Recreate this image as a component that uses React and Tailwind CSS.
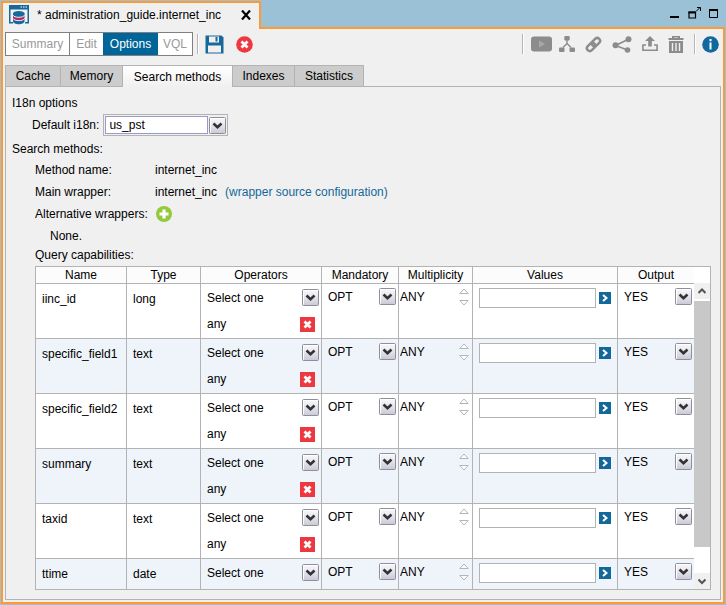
import React from "react";

const rows = [
  { name: "iinc_id", type: "long", operators: ["any"] },
  { name: "specific_field1", type: "text", operators: ["any"] },
  { name: "specific_field2", type: "text", operators: ["any"] },
  { name: "summary", type: "text", operators: ["any"] },
  { name: "taxid", type: "text", operators: ["any"] },
  { name: "ttime", type: "date", operators: [] },
];

const columns = [
  { label: "Name", width: "w-[91px]" },
  { label: "Type", width: "w-[74px]" },
  { label: "Operators", width: "w-[121px]" },
  { label: "Mandatory", width: "w-[77px]" },
  { label: "Multiplicity", width: "w-[74px]" },
  { label: "Values", width: "" },
  { label: "Output", width: "w-[76px]" },
];

function Chevron() {
  return (
    <svg className="pointer-events-none col-start-1 row-start-1 size-[17px] justify-self-end" viewBox="0 0 17 17">
      <defs>
        <linearGradient id="chevronFace" x1="0" y1="0" x2="0" y2="1">
          <stop offset="0" stopColor="#fafafc" />
          <stop offset="0.5" stopColor="#e4e4ec" />
          <stop offset="1" stopColor="#c9c9d6" />
        </linearGradient>
      </defs>
      <rect x="0.5" y="0.5" width="16" height="16" rx="1" fill="url(#chevronFace)" stroke="#8f8f9c" />
      <path d="M1.5 15.5V1.5h14" fill="none" stroke="#fff" />
      <path d="M4.5 6.5L8.5 10.2L12.5 6.5" fill="none" stroke="#333" strokeWidth="2.6" />
    </svg>
  );
}

function Picker({ value, label }) {
  return (
    <div className="grid items-center">
      <select
        aria-label={label}
        defaultValue={value}
        className="col-start-1 row-start-1 h-[17px] w-full appearance-none bg-transparent leading-4 outline-none"
      >
        <option>{value}</option>
      </select>
      <Chevron />
    </div>
  );
}

function Spinner({ label }) {
  return (
    <div className="flex items-center justify-between">
      <input aria-label={label} defaultValue="ANY" className="h-[17px] w-12 bg-transparent outline-none" />
      <svg className="h-[18px] w-[10px]" viewBox="0 0 10 18" fill="#fff" stroke="#b5b5b5">
        <path d="M0.8 5.5h8.4L5 1z" />
        <path d="M0.8 12.5h8.4L5 17z" />
      </svg>
    </div>
  );
}

function DeleteButton() {
  return (
    <button type="button" aria-label="Remove operator" className="size-[15px]">
      <svg className="block size-[15px]" viewBox="0 0 15 15">
        <rect width="15" height="15" fill="#ee383f" />
        <path d="M4.5 4.5l6 6M10.5 4.5l-6 6" stroke="#fff" strokeWidth="2.8" />
      </svg>
    </button>
  );
}

function Separator() {
  return <span className="h-5 w-[2px] border-r border-l border-r-white border-l-[#b5b5b5]" />;
}

function DatabaseIcon() {
  return (
    <svg className="h-5 w-[22px]" viewBox="0 0 22 20">
      <path d="M1 0h20v18.500h-4V17h2.500V4.500h-17V17H5v1.500H1z" fill="#17699c" />
      <path d="M12.500 2h1.500M15 2h1.500M17.500 2h1.500" stroke="#fff" strokeWidth="1" />
      <path d="M5 13.800v2.400c0 4 11.500 4 11.500 0v-2.400z" fill="#17699c" />
      <path d="M5 10.300v2.900c0 3.200 11.500 3.200 11.500 0v-2.900c-1 2.500-10.500 2.500-11.500 0z" fill="#b8295f" />
      <path d="M5 8.600v1.700c0 3 11.500 3 11.500 0V8.600z" fill="#17699c" />
      <ellipse cx="10.750" cy="8.400" rx="5.750" ry="2.300" fill="#17699c" />
      <path d="M5 10.200c1 2.800 10.500 2.800 11.500 0M5 13.500c1 2.800 10.500 2.800 11.500 0" fill="none" stroke="#fff" strokeWidth="0.900" />
    </svg>
  );
}

function SaveIcon() {
  return (
    <svg className="size-[19px]" viewBox="0 0 19 19">
      <path d="M0.500 0.500h16l2 2v16h-18z" fill="#17699c" />
      <path d="M4 1.500h10v6H4z" fill="#f0f0f0" />
      <path d="M10.500 2h2v4.500h-2z" fill="#17699c" />
      <path d="M3 10.500h13v7H3z" fill="#f0f0f0" />
    </svg>
  );
}

function CancelIcon() {
  return (
    <svg className="size-[17px]" viewBox="0 0 17 17">
      <circle cx="8.500" cy="8.500" r="8.300" fill="#ee383f" />
      <path d="M5.500 5.500l6 6M11.500 5.500l-6 6" stroke="#fff" strokeWidth="2.800" />
    </svg>
  );
}

function VideoIcon() {
  return (
    <svg className="h-4 w-[21px]" viewBox="0 0 21 16">
      <rect y="0.500" width="21" height="15" rx="3" fill="#8c8c8c" />
      <path d="M8 4.500v7l6-3.500z" fill="#a8a8a8" />
    </svg>
  );
}

function TreeIcon() {
  return (
    <svg className="size-4" viewBox="0 0 16 16" fill="#8c8c8c">
      <rect x="5.300" width="5.400" height="4.500" rx="1" />
      <rect y="11.500" width="5.500" height="4.500" rx="1" />
      <rect x="10.500" y="11.500" width="5.500" height="4.500" rx="1" />
      <path d="M8 4v4M8 7.500L4 11.500M8 7.500l4 4" stroke="#8c8c8c" strokeWidth="1.400" />
    </svg>
  );
}

function LinkIcon() {
  return (
    <svg className="size-[17px]" viewBox="0 0 17 17" fill="none" stroke="#8c8c8c" strokeWidth="2.400">
      <rect x="-4.700" y="-2.900" width="9.400" height="5.800" rx="2.900" transform="translate(10.900 6.100) rotate(-45)" />
      <rect x="-4.700" y="-2.900" width="9.400" height="5.800" rx="2.900" transform="translate(6.100 10.900) rotate(-45)" />
    </svg>
  );
}

function ShareIcon() {
  return (
    <svg className="h-[17px] w-5" viewBox="0 0 20 17" fill="#8c8c8c">
      <path d="M16.500 3.300L3.500 9.500L15.500 14" fill="none" stroke="#8c8c8c" strokeWidth="1.600" />
      <circle cx="16.500" cy="3.300" r="3" />
      <circle cx="3.500" cy="9.300" r="3" />
      <circle cx="15.500" cy="14" r="2.800" />
    </svg>
  );
}

function UploadIcon() {
  return (
    <svg className="size-4" viewBox="0 0 16 16" fill="#8c8c8c">
      <path d="M8 0l5 5h-3.200v5.500H6.200V5H3z" />
      <path d="M0.900 8.500v5.800h14.200V8.500M0.500 9H4M12 9h3.500" fill="none" stroke="#8c8c8c" strokeWidth="1.600" />
    </svg>
  );
}

function TrashIcon() {
  return (
    <svg className="h-[17px] w-4" viewBox="0 0 16 17">
      <path d="M0.500 3h15M5 2.500v-2h6v2" fill="none" stroke="#8c8c8c" strokeWidth="2" />
      <path d="M1 5h14v12H1z" fill="#8c8c8c" />
      <path d="M4.500 7v8M8 7v8M11.500 7v8" stroke="#f0f0f0" strokeWidth="1.400" />
    </svg>
  );
}

function InfoIcon() {
  return (
    <svg className="size-[17px]" viewBox="0 0 17 17">
      <circle cx="8.500" cy="8.500" r="8.300" fill="#0f689e" />
      <path d="M8.500 3v2.200M8.500 6.500v7" stroke="#fff" strokeWidth="2" />
    </svg>
  );
}

function IconButton({ label, children }) {
  return (
    <button type="button" aria-label={label} className="flex items-center">
      {children}
    </button>
  );
}

function TitleBar() {
  return (
    <header className="flex h-[28px]">
      <div className="flex w-[260px] items-center border-2 border-b-0 border-[#ff9a33] bg-[#f0f0f0] pr-2 pb-[2px] pl-[5px]">
        <DatabaseIcon />
        <span className="flex-1 pl-[7px] whitespace-pre">* administration_guide.internet_inc</span>
        <button type="button" aria-label="Close">
          <svg className="size-[10px]" viewBox="0 0 10 10">
            <path d="M1 0.500l8 9M9 0.500l-8 9" stroke="#000" strokeWidth="2.200" />
          </svg>
        </button>
      </div>
      <div className="flex flex-1 items-start justify-end gap-2 border-b-2 border-[#ff9a33] pt-[6px] pr-[6px]">
        <IconButton label="Minimize">
          <svg className="h-3 w-[11px]" viewBox="0 0 11 12">
            <path d="M1 10h9" stroke="#000" strokeWidth="2" />
          </svg>
        </IconButton>
        <IconButton label="Detach">
          <svg className="h-3 w-[13px]" viewBox="0 0 13 12" fill="none" stroke="#000">
            <path d="M1 5h6.500v6H1z" strokeWidth="1.200" />
            <path d="M0.500 5.500h7" strokeWidth="2" />
            <path d="M8 4.500L12 0.500M9 0.500h3.500v3.500" />
          </svg>
        </IconButton>
        <IconButton label="Maximize">
          <svg className="h-3 w-[10px]" viewBox="0 0 10 12" fill="none" stroke="#000">
            <path d="M0.500 3.500h8v7h-8z" />
            <path d="M0 3h9" strokeWidth="2" />
          </svg>
        </IconButton>
      </div>
    </header>
  );
}

function Toolbar() {
  return (
    <div className="flex h-[36px] items-center pt-[1px] pr-[2px] pb-[7px]">
      <nav className="flex h-6 border border-[#808080] bg-white text-[#999]">
        <button type="button" className="w-16 border-r border-[#808080]">Summary</button>
        <button type="button" className="w-[33px]">Edit</button>
        <button type="button" className="w-[55px] bg-[#006699] text-white">Options</button>
        <button type="button" className="w-[34px]">VQL</button>
      </nav>
      <div className="flex flex-1 items-center gap-[6px] pl-1">
        <Separator />
        <IconButton label="Save"><SaveIcon /></IconButton>
        <span className="pl-[6px]"><IconButton label="Cancel"><CancelIcon /></IconButton></span>
      </div>
      <div className="flex items-center gap-[10px]">
        <div className="flex items-center gap-[7px]">
          <Separator />
          <IconButton label="Video"><VideoIcon /></IconButton>
          <IconButton label="Tree view"><TreeIcon /></IconButton>
        </div>
        <IconButton label="Used by"><LinkIcon /></IconButton>
        <IconButton label="Share"><ShareIcon /></IconButton>
        <IconButton label="Deploy"><UploadIcon /></IconButton>
        <IconButton label="Delete"><TrashIcon /></IconButton>
        <div className="flex items-center gap-[6px]">
          <Separator />
          <IconButton label="Information"><InfoIcon /></IconButton>
        </div>
      </div>
    </div>
  );
}

function Tabs() {
  const tab = "h-full border-t border-r border-[#b3b3b3]";
  return (
    <div className="flex h-[22px]">
      <button type="button" className={`${tab} w-[56px] border-b border-l bg-[#ccc]`}>Cache</button>
      <button type="button" className={`${tab} w-[62px] border-b bg-[#ccc]`}>Memory</button>
      <button type="button" className={`${tab} w-[110px] bg-linear-to-b from-white to-[#f0f0f0]`}>Search methods</button>
      <button type="button" className={`${tab} w-[62px] border-b bg-[#ccc]`}>Indexes</button>
      <button type="button" className={`${tab} w-[69px] border-b bg-[#ccc]`}>Statistics</button>
      <span className="flex-1 border-b border-[#b3b3b3]" />
    </div>
  );
}

function ScrollBar() {
  return (
    <div className="flex w-4 flex-col bg-white">
      <div className="h-4" />
      <button type="button" aria-label="Scroll up" className="flex h-4 items-center justify-center bg-[#f0f0f0]">
        <svg className="size-2" viewBox="0 0 8 8">
          <path d="M0.500 6L4 2.500L7.500 6" fill="none" stroke="#555" strokeWidth="2" />
        </svg>
      </button>
      <div className="flex-1 pt-[2px] pb-[26px]">
        <div className="h-full bg-[#c8c8c8]" />
      </div>
      <button type="button" aria-label="Scroll down" className="flex h-4 items-center justify-center bg-[#f0f0f0]">
        <svg className="size-2" viewBox="0 0 8 8">
          <path d="M0.500 2.500L4 6L7.500 2.500" fill="none" stroke="#555" strokeWidth="2" />
        </svg>
      </button>
    </div>
  );
}

function CapabilitiesTable() {
  const cell = "border-b border-[#b3b3b3] p-0 align-top";
  return (
    <div className="mr-[9px] mb-[9px] ml-[29px] flex min-h-0 flex-1 overflow-hidden border border-[#b3b3b3]">
      <div className="min-w-0 flex-1 overflow-hidden">
        <table className="w-full table-fixed border-separate border-spacing-0">
          <thead>
            <tr className="h-[17px] bg-[#fcfcfc]">
              {columns.map((c) => (
                <th
                  key={c.label}
                  className={`${c.width} h-[17px] border-b border-[#b3b3b3] p-0 leading-4 font-normal not-last:border-r`}
                >
                  {c.label}
                </th>
              ))}
            </tr>
          </thead>
          <tbody>
            {rows.map((r) => (
              <tr key={r.name} className="h-[55px] bg-white even:bg-[#eef4f9]">
                <td className={`${cell} border-r pt-[7px] pl-[6px]`}>{r.name}</td>
                <td className={`${cell} border-r pt-[7px] pl-[6px]`}>{r.type}</td>
                <td className={`${cell} border-r pt-[5px] pr-[2px] pl-[6px]`}>
                  <Picker value="Select one" label={`Add operator for ${r.name}`} />
                  {r.operators.map((o) => (
                    <div key={o} className="flex items-center justify-between pt-[10px] pr-[4px]">
                      <span>{o}</span>
                      <DeleteButton />
                    </div>
                  ))}
                </td>
                <td className={`${cell} border-r pt-1 pr-[2px] pl-[6px]`}>
                  <Picker value="OPT" label={`Mandatory for ${r.name}`} />
                </td>
                <td className={`${cell} border-r pt-1 pr-[3px] pl-[1px]`}>
                  <Spinner label={`Multiplicity for ${r.name}`} />
                </td>
                <td className={`${cell} border-r pt-1 pr-[6px] pl-[6px]`}>
                  <div className="flex items-center gap-[3px]">
                    <input
                      aria-label={`Values for ${r.name}`}
                      className="h-5 min-w-0 flex-1 border border-[#b3b3b3] bg-white px-1 outline-none"
                    />
                    <button type="button" aria-label="Edit values" className="bg-[#13689b]">
                      <svg className="block size-3" viewBox="0 0 12 12">
                        <path d="M4 3L7.500 6L4 9" fill="none" stroke="#fff" strokeWidth="2" />
                      </svg>
                    </button>
                  </div>
                </td>
                <td className={`${cell} pt-1 pr-[2px] pl-[6px]`}>
                  <Picker value="YES" label={`Output for ${r.name}`} />
                </td>
              </tr>
            ))}
          </tbody>
        </table>
      </div>
      <ScrollBar />
    </div>
  );
}

export default function App() {
  return (
    <div className="flex h-screen flex-col bg-[#9ac1d6] p-px font-['Liberation_Sans',Arial,sans-serif] text-[12px] leading-4 text-black">
      <TitleBar />
      <main className="flex min-h-0 flex-1 flex-col border-2 border-t-0 border-[#ff9a33] bg-[#f0f0f0] px-[2px] pb-[2px]">
        <Toolbar />
        <Tabs />
        <section className="flex min-h-0 flex-1 flex-col border border-t-0 border-[#b3b3b3] pt-2">
          <h2 className="pl-[6px]">I18n options</h2>
          <div className="flex items-center gap-1 pt-[3px] pl-[26px]">
            <label htmlFor="i18n">Default i18n:</label>
            <div className="grid w-[125px] items-center border border-[#b3b3b3] p-px">
              <select
                id="i18n"
                defaultValue="us_pst"
                className="col-start-1 row-start-1 mr-[18px] h-[18px] appearance-none border border-[#9999cc] bg-white pl-[3px] leading-4 outline-none"
              >
                <option>us_pst</option>
              </select>
              <Chevron />
            </div>
          </div>
          <h2 className="pt-[5px] pl-[6px]">Search methods:</h2>
          <dl className="grid grid-cols-[120px_1fr] gap-y-[6px] pt-[5px] pl-[29px]">
            <dt>Method name:</dt>
            <dd>internet_inc</dd>
            <dt>Main wrapper:</dt>
            <dd className="flex gap-2">
              internet_inc
              <a href="#wrapper" className="text-[#13689b]">(wrapper source configuration)</a>
            </dd>
            <dt>Alternative wrappers:</dt>
            <dd>
              <button type="button" aria-label="Add alternative wrapper" className="block">
                <svg className="h-4 w-[18px]" viewBox="0 0 18 16">
                  <circle cx="9" cy="8" r="8" fill="#95c93d" />
                  <path d="M9 3.500v9M4.500 8h9" stroke="#fff" strokeWidth="3.200" />
                </svg>
              </button>
            </dd>
            <dd className="col-span-2 pl-[15px]">None.</dd>
          </dl>
          <h3 className="py-[3px] pl-[29px]">Query capabilities:</h3>
          <CapabilitiesTable />
        </section>
      </main>
    </div>
  );
}
